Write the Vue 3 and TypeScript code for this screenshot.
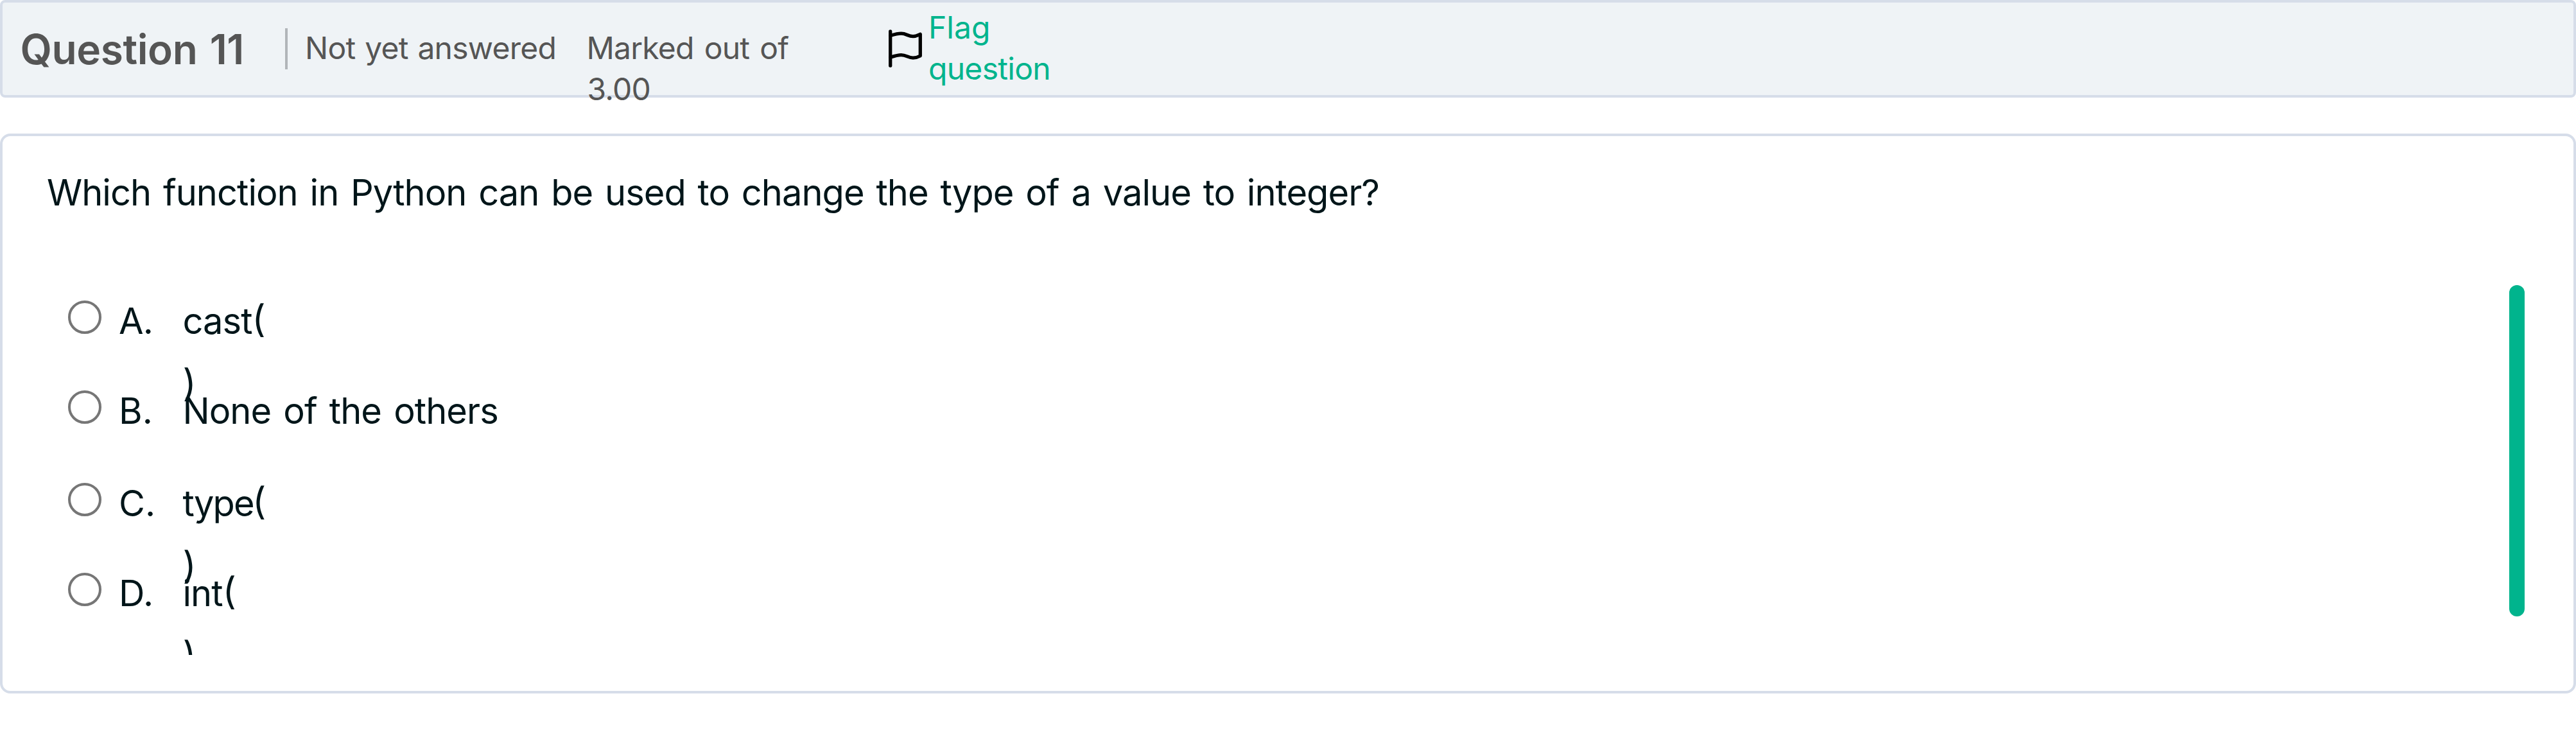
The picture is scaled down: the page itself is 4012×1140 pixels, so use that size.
<script setup lang="ts">
import { ref } from 'vue'

interface Option {
  letter: string
  name: string
  call: boolean
}

const options: Option[] = [
  { letter: 'A.', name: 'cast', call: true },
  { letter: 'B.', name: 'None of the others', call: false },
  { letter: 'C.', name: 'type', call: true },
  { letter: 'D.', name: 'int', call: true },
]

const selected = ref<string | null>(null)
</script>

<template>
  <main class="question">
    <header class="info">
      <h3 class="number">Question 11</h3>
      <span class="divider"></span>
      <div class="state">Not yet answered</div>
      <div class="grade">
        <div class="grade-label">Marked out of</div>
        <div class="grade-value">3.00</div>
      </div>
      <a class="flag">
        <svg class="flag-icon" viewBox="0 0 60 64" fill="none" stroke="#000" stroke-width="5.3" stroke-linecap="round" stroke-linejoin="round">
          <path d="M6.7 5V58.3" />
          <path d="M6.7 11.5C13 9.6 18 8.2 23.5 8.2C32 8.2 34 12.6 42 12.6C47 12.6 50 10.6 53.3 9.2V43C50 44.8 47 46.2 42 46.2C34 46.2 32 41.6 23.5 41.6C18 41.6 13 43.2 6.7 45.2" />
        </svg>
        <span class="flag-text">Flag<br /><span class="flag-word">question</span></span>
      </a>
    </header>

    <section class="card">
      <p class="prompt">Which function in Python can be used to change the type of a value to integer?</p>
      <div class="body">
        <div class="answers">
          <label v-for="o in options" :key="o.letter" class="answer">
            <input v-model="selected" class="radio" type="radio" name="answer" :value="o.letter" />
            <span class="letter">{{ o.letter }}</span>
            <span class="label" :class="{ tight: o.name === 'type' }">
              <span class="line">{{ o.name }}<span v-if="o.call" class="paren">(</span></span>
              <span v-if="o.call" class="line"><span class="paren close">)</span></span>
            </span>
          </label>
        </div>
        <span class="thumb"></span>
      </div>
    </section>
  </main>
</template>

<style>
body {
  background: #fff;
}
</style>

<style scoped>
.question {
  width: 4012px;
  height: 1140px;
  overflow: hidden;
  font-family: Inter, 'Liberation Sans', sans-serif;
  color: #001519;
}
.info {
  box-sizing: border-box;
  display: flex;
  align-items: flex-start;
  height: 152px;
  padding: 0 28px 0 27.5px;
  border: 4px solid #d6dde9;
  border-radius: 8px;
  background: #eff3f6;
  color: #555;
  font-size: 48px;
  line-height: 64px;
}
.number {
  width: 412.5px;
  margin: 40.5px 0 0;
  font-size: 64px;
  font-weight: 600;
  letter-spacing: -0.4px;
  word-spacing: 3.5px;
  white-space: nowrap;
}
.divider {
  width: 4px;
  height: 64px;
  margin-top: 40px;
  background: #b1b5b9;
}
.state {
  width: 438.5px;
  margin: 38.5px 0 0 27px;
  letter-spacing: -0.75px;
  word-spacing: 2px;
  white-space: nowrap;
}
.grade {
  width: 466.5px;
  margin-top: 38.5px;
  letter-spacing: -0.8px;
}
.grade-label {
  word-spacing: 3.5px;
}
.grade-value {
  padding-left: 1px;
}
.flag {
  display: flex;
  align-items: flex-start;
  color: #00b48d;
}
.flag-icon {
  width: 60px;
  height: 64px;
  margin-top: 40px;
}
.flag-text {
  margin: 6.5px 0 0 6px;
}
.flag-word {
  letter-spacing: -0.7px;
}
.card {
  box-sizing: border-box;
  height: 872px;
  margin-top: 56px;
  padding: 38px 76px 0 69px;
  border: 4px solid #d6dde9;
  border-radius: 16px;
  background: #fff;
  font-size: 56px;
  line-height: 100px;
}
.prompt {
  margin: 0;
  letter-spacing: -0.96px;
  word-spacing: 4px;
}
.body {
  display: flex;
  justify-content: space-between;
  height: 576px;
  margin-top: 94px;
  overflow: hidden;
}
.answers {
  padding: 6px 0 0 33px;
}
.answer {
  display: flex;
  align-items: flex-start;
  height: 140px;
}
.answer:nth-child(2) {
  height: 144px;
}
.radio {
  appearance: none;
  flex: none;
  box-sizing: border-box;
  width: 52px;
  height: 52px;
  margin: 18px 27px 0 0;
  border: 4px solid #767676;
  border-radius: 50%;
  background: #fff;
}
.letter {
  width: 99.5px;
}
.answer:first-child .letter {
  letter-spacing: -1px;
}
.label {
  letter-spacing: -0.95px;
  word-spacing: 4.3px;
  white-space: nowrap;
}
.label.tight {
  letter-spacing: -1.9px;
}
.line {
  display: block;
}
/* Brackets sit slightly above the baseline of the surrounding text. */
.paren {
  font-size: 58px;
  line-height: 0;
  vertical-align: 3px;
}
.tight .paren:not(.close) {
  margin-left: -1.5px;
}
.thumb {
  width: 24px;
  height: 516px;
  border-radius: 12px;
  background: #00b48d;
}
</style>
